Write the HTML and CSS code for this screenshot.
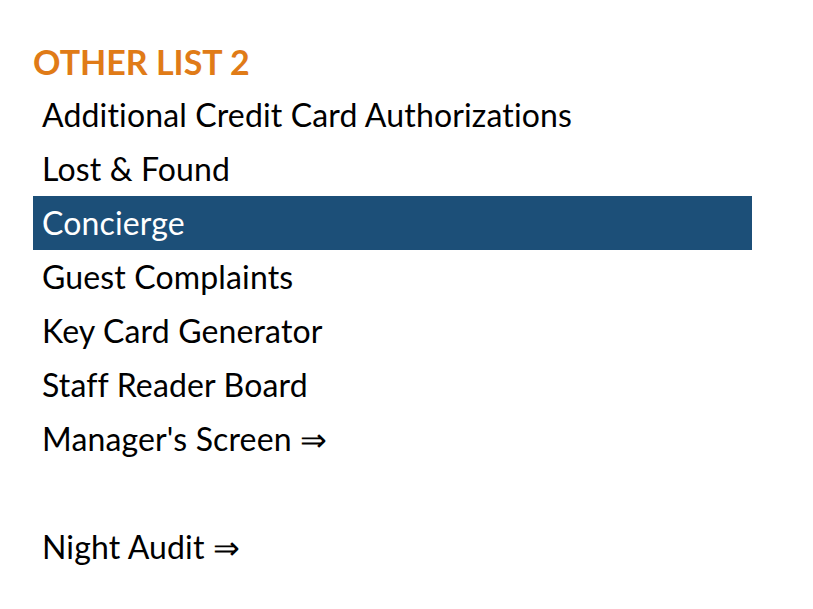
FILE: index.html
```html
<!DOCTYPE html>
<html lang="en">

<head>
    <meta charset="UTF-8">
    <title>Other List 2</title>
    <link rel="stylesheet" href="styles.css">
</head>

<body>
    <main>
        <h2 class="liste-titel">OTHER LIST 2</h2>
        <ul class="liste">
            <li>Additional Credit Card Authorizations</li>
            <li>Lost &amp; Found</li>
            <li class="valgt">Concierge</li>
            <li>Guest Complaints</li>
            <li>Key Card Generator</li>
            <li>Staff Reader Board</li>
            <li>Manager's Screen &rArr;</li>
            <li class="tom"></li>
            <li>Night Audit &rArr;</li>
        </ul>
    </main>
</body></html>
```

FILE: styles.css
```css
* {
    box-sizing: border-box;
    padding: 0;
    margin: 0;
}

body {
    font-family: Lato, "Open Sans", sans-serif;
    font-variant-ligatures: none;
    background: #fff;
    color: #000;
}

main {
    padding: 42px 0 0 33px;
    width: 752px;
}

.liste-titel {
    color: #e07b17;
    font-size: 34px;
    font-weight: 700;
    line-height: 40px;
    margin-bottom: 6px;
}

.liste {
    list-style: none;
}

.liste li {
    height: 54px;
    line-height: 54px;
    padding-left: 9px;
    font-size: 32px;
    letter-spacing: 0.15px;
}

.liste li.valgt {
    background: #1c4f78;
    color: #fff;
}
```
